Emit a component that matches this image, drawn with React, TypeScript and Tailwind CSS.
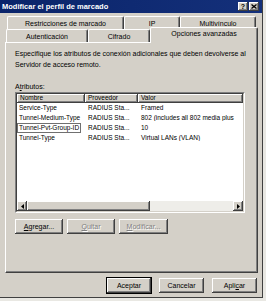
import React from "react";

const raised =
  "bg-[#d4d0c8] shadow-[inset_-1px_-1px_0_#404040,inset_1px_1px_0_#ffffff,inset_-2px_-2px_0_#808080]";

function Btn({
  children,
  w,
  disabled,
  def,
}: {
  children: React.ReactNode;
  w: string;
  disabled?: boolean;
  def?: boolean;
}) {
  return (
    <div
      className={`${w} h-[15px] flex items-center justify-center ${raised} ${
        def ? "outline outline-1 outline-black" : ""
      } ${disabled ? "text-[#808080] [text-shadow:1px_1px_0_#ffffff]" : "text-black"}`}
    >
      {children}
    </div>
  );
}

function Tab({
  label,
  w,
  selected,
}: {
  label: string;
  w: string;
  selected?: boolean;
}) {
  if (selected) {
    return (
      <div
        className={`${w} h-[16px] -mt-[2px] -mb-[1px] relative z-10 bg-[#d4d0c8] border-l border-t border-white border-r border-r-[#404040] rounded-tl-[2px] rounded-tr-[2px] shadow-[inset_-1px_0_0_#808080] flex items-start justify-center pt-[2px]`}
      >
        {label}
      </div>
    );
  }
  return (
    <div
      className={`${w} h-[13px] bg-[#d4d0c8] border-l border-t border-white border-r border-r-[#404040] rounded-tl-[2px] rounded-tr-[2px] shadow-[inset_-1px_0_0_#808080] flex items-center justify-center`}
    >
      {label}
    </div>
  );
}

const rows = [
  ["Service-Type", "RADIUS Sta...", "Framed"],
  ["Tunnel-Medium-Type", "RADIUS Sta...", "802 (includes all 802 media plus"],
  ["Tunnel-Pvt-Group-ID", "RADIUS Sta...", "10"],
  ["Tunnel-Type", "RADIUS Sta...", "Virtual LANs (VLAN)"],
];

export default function App() {
  return (
    <div className="w-[266px] h-[301px] bg-[#e9e8e3] overflow-hidden font-['Liberation_Sans',Arial,sans-serif] text-[7px] leading-none text-black">
      <div className="w-[263px] h-[298px] bg-[#d4d0c8] border-r border-b border-[#404040] flex flex-col">
        {/* title bar */}
        <div className="h-[13px] bg-gradient-to-r from-[#0a246a] to-[#14307a] flex items-center pl-[2px] pr-[3px]">
          <span className="text-white font-bold text-[7.5px]">
            Modificar el perfil de marcado
          </span>
          <div className="ml-auto flex gap-[1px]">
            <div className={`w-[10px] h-[9px] ${raised} flex items-center justify-center font-bold text-[7px]`}>
              ?
            </div>
            <div className={`w-[10px] h-[9px] ${raised} flex items-center justify-center`}>
              <svg width="6" height="5" viewBox="0 0 6 5">
                <path d="M0.5 0.5 L5.5 4.5 M5.5 0.5 L0.5 4.5" stroke="#000" strokeWidth="1.3" />
              </svg>
            </div>
          </div>
        </div>

        {/* tabs */}
        <div className="pt-[3px]">
          <div className="flex pl-[7px]">
            <Tab label="Restricciones de marcado" w="w-[117px]" />
            <Tab label="IP" w="w-[56px]" />
            <Tab label="Multivínculo" w="w-[76px]" />
          </div>
          <div className="flex pl-[6px]">
            <Tab label="Autenticación" w="w-[82px]" />
            <Tab label="Cifrado" w="w-[62px]" />
            <Tab label="Opciones avanzadas" w="w-[108px]" selected />
          </div>
        </div>

        {/* panel */}
        <div className="ml-[5px] w-[253px] h-[231px] border-l border-t border-white border-r border-b border-r-[#404040] border-b-[#404040] shadow-[inset_-1px_-1px_0_#808080] pl-[9px] pt-[5px]">
          <div className="leading-[11px]">
            <div>Especifique los atributos de conexión adicionales que deben devolverse al</div>
            <div>Servidor de acceso remoto.</div>
          </div>
          <div className="mt-[12px] h-[10px] leading-[10px]">
            A<span className="underline">t</span>ributos:
          </div>
          {/* list */}
          <div className="w-[230px] h-[121px] border border-t-[#808080] border-l-[#808080] border-r-white border-b-white text-[6.5px]">
            <div className="w-full h-full border border-t-[#404040] border-l-[#404040] border-r-[#d4d0c8] border-b-[#d4d0c8] bg-white flex flex-col">
              <div className="flex h-[9px]">
                <div className={`w-[68px] h-full ${raised} pl-[3px] flex items-center`}>Nombre</div>
                <div className={`w-[53px] h-full ${raised} pl-[3px] flex items-center`}>Proveedor</div>
                <div className={`flex-1 h-full ${raised} pl-[3px] flex items-center`}>Valor</div>
              </div>
              <div className="flex-1 flex flex-col">
                {rows.map((r, i) => (
                  <div key={i} className="flex h-[10px] items-center whitespace-nowrap">
                    <div className="w-[68px] h-full flex items-center">
                      <span
                        className={`px-[1px] h-[10px] flex items-center ${
                          i === 2 ? "border border-[#707070]" : "border border-transparent"
                        }`}
                      >
                        {r[0]}
                      </span>
                    </div>
                    <div className="w-[53px] pl-[3px]">{r[1]}</div>
                    <div className="flex-1 pl-[3px] overflow-hidden">{r[2]}</div>
                  </div>
                ))}
              </div>
              {/* horizontal scrollbar */}
              <div className="h-[10px] flex bg-[#eeede9]">
                <div className={`w-[10px] h-full ${raised} flex items-center justify-center`}>
                  <svg width="3" height="5" viewBox="0 0 3 5">
                    <path d="M3 0 L0 2.5 L3 5 Z" fill="#000" />
                  </svg>
                </div>
                <div className={`w-[123px] h-full ${raised}`} />
                <div className="flex-1" />
                <div className={`w-[10px] h-full ${raised} flex items-center justify-center`}>
                  <svg width="3" height="5" viewBox="0 0 3 5">
                    <path d="M0 0 L3 2.5 L0 5 Z" fill="#000" />
                  </svg>
                </div>
              </div>
            </div>
          </div>
          <div className="flex gap-[4px] mt-[6px]">
            <Btn w="w-[48px]">
              <span>
                <span className="underline">A</span>gregar...
              </span>
            </Btn>
            <Btn w="w-[48px]" disabled>
              <span>
                <span className="underline">Q</span>uitar
              </span>
            </Btn>
            <Btn w="w-[49px]" disabled>
              <span>
                <span className="underline">M</span>odificar...
              </span>
            </Btn>
          </div>
        </div>

        {/* dialog buttons */}
        <div className="flex gap-[8px] ml-[107px] mt-[5px]">
          <Btn w="w-[44px]" def>
            Aceptar
          </Btn>
          <Btn w="w-[45px]">Cancelar</Btn>
          <Btn w="w-[45px]">
            <span>
              Apli<span className="underline">c</span>ar
            </span>
          </Btn>
        </div>
      </div>
    </div>
  );
}
